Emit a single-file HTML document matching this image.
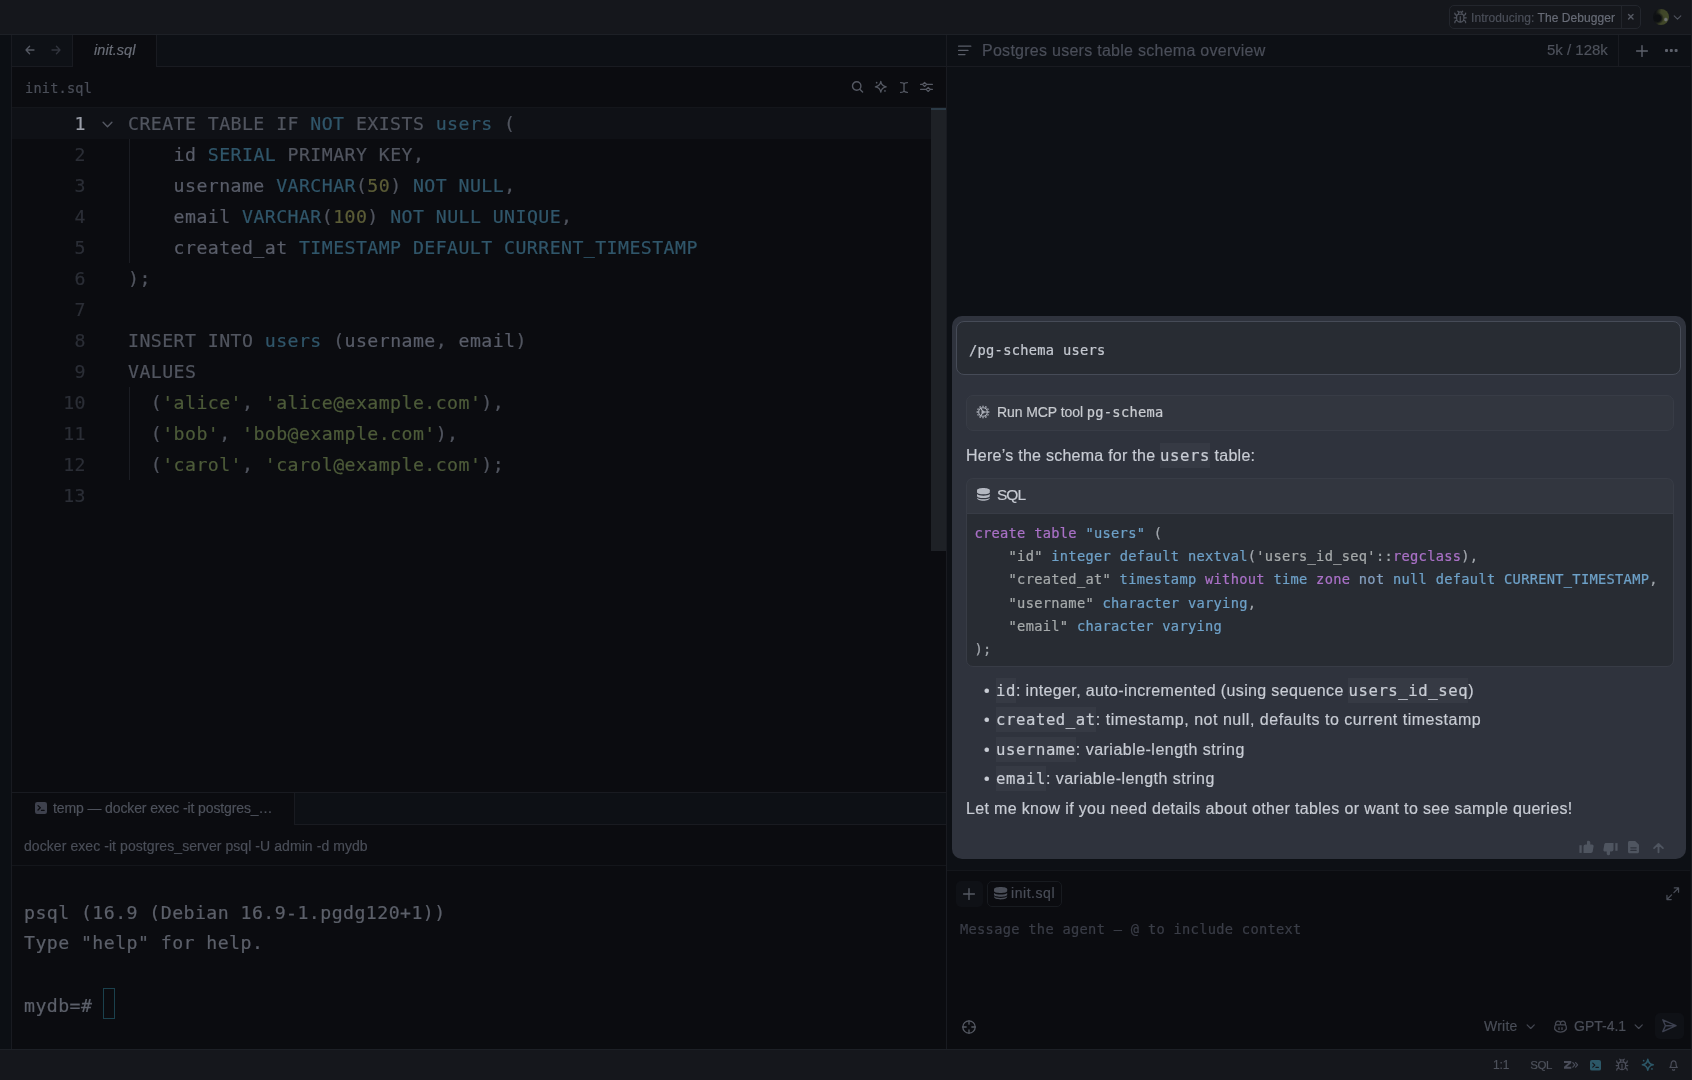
<!DOCTYPE html>
<html lang="en">
<head>
<meta charset="utf-8">
<title>Zed — init.sql</title>
<style>
:root{
  --ui:"Liberation Sans", sans-serif;
  --mono:"DejaVu Sans Mono","Liberation Mono", monospace;
  --bg-title:#15171c;
  --bg-panel:#0d1015;
  --bg-editor:#0b0c10;
  --bd:#191b21;
  --txt:#5d616b;
  --txt-b:#7a7e88;
  --blue:#30566a;
  --num:#5c5d37;
  --str:#4d5b39;
}
*{box-sizing:border-box;margin:0;padding:0}
html,body{width:1692px;height:1080px;overflow:hidden;background:var(--bg-panel)}
body{position:relative;font-family:var(--ui);color:var(--txt);font-size:15px}
.abs{position:absolute}
.t{position:absolute;white-space:pre;line-height:1}
svg{position:absolute;overflow:visible}

/* title + status */
#title{left:0;top:0;width:1692px;height:35px;background:var(--bg-title);border-bottom:1px solid #1d2026}
#status{left:0;top:1049px;width:1692px;height:31px;background:var(--bg-title);border-top:1px solid #1d2026}
#lgut{left:0;top:35px;width:12px;height:1014px;background:#0c0f14;border-right:1px solid var(--bd)}
#rgut{left:1691px;top:0;width:1px;height:1080px;background:#1b1d22;z-index:5}

/* editor pane */
#tabbar{left:12px;top:35px;width:934px;height:32px;background:#0d1015;border-bottom:1px solid var(--bd)}
#nav{left:12px;top:35px;width:61px;height:32px;border-right:1px solid var(--bd);border-bottom:1px solid var(--bd);background:#0e1116}
#tab{left:73px;top:35px;width:84px;height:32px;background:var(--bg-editor);border-right:1px solid var(--bd)}
#toolbar{left:12px;top:67px;width:934px;height:41px;background:var(--bg-editor);border-bottom:1px solid #14161b}
#editor{left:12px;top:108px;width:934px;height:684px;background:var(--bg-editor)}
#actline{left:12px;top:108px;width:919px;height:31px;background:#0f1116}
#scroll{left:931px;top:108px;width:15px;height:443px;background:#1e2126}
#split{left:946px;top:35px;width:1px;height:1014px;background:var(--bd)}

.code{font-family:var(--mono);font-size:18.2px;letter-spacing:.445px;line-height:31px;white-space:pre;position:absolute}
.ln{position:absolute;left:30px;width:56px;text-align:right;color:#2b2e36}
.k{color:#51555f}.b{color:var(--blue)}.p{color:#595d69}.n{color:var(--num)}.s{color:var(--str)}

/* terminal */
#ttabbar{left:12px;top:792px;width:934px;height:33px;background:#0d1015;border-top:1px solid var(--bd);border-bottom:1px solid var(--bd)}
#ttab{left:12px;top:793px;width:283px;height:32px;background:var(--bg-editor);border-right:1px solid var(--bd)}
#tcrumb{left:12px;top:825px;width:934px;height:41px;background:var(--bg-editor);border-bottom:1px solid #14161b}
#term{left:12px;top:866px;width:934px;height:183px;background:var(--bg-editor)}

/* agent */
#ahead{left:947px;top:35px;width:743px;height:32px;background:#0d1015;border-bottom:1px solid var(--bd)}
#abody{left:947px;top:67px;width:743px;height:803px;background:#0d1015}
#aedit{left:947px;top:870px;width:743px;height:179px;background:var(--bg-editor);border-top:1px solid #14161b}

#card{left:952px;top:316px;width:734px;height:543px;background:#2f333d;border-radius:10px}
#umsg{left:956px;top:321px;width:725px;height:54px;background:#282c33;border:1px solid #464b57;border-radius:8px}
#tool{left:966px;top:395px;width:708px;height:36px;background:#32363f;border:1px solid #383c46;border-radius:7px}
#cbh{left:966px;top:478px;width:708px;height:36px;background:#32363f;border:1px solid #383c46;border-bottom:none;border-radius:7px 7px 0 0}
#cbb{left:966px;top:513px;width:708px;height:154px;background:#282c33;border:1px solid #383c46;border-top:1px solid #383c46;border-radius:0 0 7px 7px}
.ccode{font-family:var(--mono);font-size:13.7px;letter-spacing:.3px;line-height:23.2px;white-space:pre;position:absolute;color:#b9bec8}
.ck{color:#aa71c7}.cb{color:#6ea1c8}.cs{color:#a6aaab}.cp{color:#a3a8ae}
.body{font-family:var(--ui);font-size:16px;color:#c8ccd4;letter-spacing:.34px}
.ic{font-family:var(--mono);font-size:15.6px;letter-spacing:.59px;background:#363a44;color:#c8ccd4;padding:4.200px 0 2.800px}

.ui{position:absolute;white-space:pre;font-family:var(--ui);-webkit-text-stroke:.18px currentColor}
.m{font-family:var(--mono)}
.m,.code,.ccode,.ic{-webkit-text-stroke:.22px currentColor}
</style>
</head>
<body>
<div id="root" style="position:absolute;left:0;top:0;width:1692px;height:1080px;will-change:transform;overflow:hidden">
<div class="abs" id="title"></div>
<div class="abs" id="lgut"></div>
<div class="abs" id="rgut"></div>
<div class="abs" id="status"></div>

<!-- EDITOR PANE -->
<div class="abs" id="tabbar"></div>
<div class="abs" id="nav"></div>
<div class="abs" id="tab"></div>
<div class="abs" id="toolbar"></div>
<div class="abs" id="editor"></div>
<div class="abs" id="actline"></div>
<div class="abs" id="scroll"></div>
<div class="abs" style="left:931px;top:108px;width:15px;height:2px;background:#2b3a46"></div>
<div class="abs" id="split"></div>

<!-- TERMINAL -->
<div class="abs" id="ttabbar"></div>
<div class="abs" id="ttab"></div>
<div class="abs" id="tcrumb"></div>
<div class="abs" id="term"></div>

<!-- AGENT -->
<div class="abs" id="ahead"></div>
<div class="abs" id="abody"></div>
<div class="abs" id="aedit"></div>
<div class="abs" id="card"></div>
<div class="abs" id="umsg"></div>
<div class="abs" id="tool"></div>
<div class="abs" id="cbh"></div>
<div class="abs" id="cbb"></div>


<!-- editor text -->
<div class="code ln" style="top:108px;color:#9a9ea8">1</div>
<div class="code ln" style="top:139px">2</div>
<div class="code ln" style="top:170px">3</div>
<div class="code ln" style="top:201px">4</div>
<div class="code ln" style="top:232px">5</div>
<div class="code ln" style="top:263px">6</div>
<div class="code ln" style="top:294px">7</div>
<div class="code ln" style="top:325px">8</div>
<div class="code ln" style="top:356px">9</div>
<div class="code ln" style="top:387px">10</div>
<div class="code ln" style="top:418px">11</div>
<div class="code ln" style="top:449px">12</div>
<div class="code ln" style="top:480px">13</div>
<div class="abs" style="left:129px;top:139px;width:1px;height:124px;background:#1b1d23"></div>
<div class="abs" style="left:129px;top:387px;width:1px;height:93px;background:#1b1d23"></div>
<div class="code" style="left:128px;top:108px"><span class="k">CREATE TABLE IF</span> <span class="b">NOT</span> <span class="k">EXISTS</span> <span class="b">users</span> <span class="k">(</span></div>
<div class="code" style="left:128px;top:139px">    <span class="p">id</span> <span class="b">SERIAL</span> <span class="k">PRIMARY KEY,</span></div>
<div class="code" style="left:128px;top:170px">    <span class="p">username</span> <span class="b">VARCHAR</span><span class="k">(</span><span class="n">50</span><span class="k">)</span> <span class="b">NOT NULL</span><span class="k">,</span></div>
<div class="code" style="left:128px;top:201px">    <span class="p">email</span> <span class="b">VARCHAR</span><span class="k">(</span><span class="n">100</span><span class="k">)</span> <span class="b">NOT NULL UNIQUE</span><span class="k">,</span></div>
<div class="code" style="left:128px;top:232px">    <span class="p">created_at</span> <span class="b">TIMESTAMP DEFAULT CURRENT_TIMESTAMP</span></div>
<div class="code" style="left:128px;top:263px"><span class="k">);</span></div>
<div class="code" style="left:128px;top:325px"><span class="k">INSERT INTO</span> <span class="b">users</span> <span class="k">(</span><span class="p">username</span><span class="k">,</span> <span class="p">email</span><span class="k">)</span></div>
<div class="code" style="left:128px;top:356px"><span class="k">VALUES</span></div>
<div class="code" style="left:128px;top:387px">  <span class="k">(</span><span class="s">'alice'</span><span class="k">,</span> <span class="s">'alice@example.com'</span><span class="k">),</span></div>
<div class="code" style="left:128px;top:418px">  <span class="k">(</span><span class="s">'bob'</span><span class="k">,</span> <span class="s">'bob@example.com'</span><span class="k">),</span></div>
<div class="code" style="left:128px;top:449px">  <span class="k">(</span><span class="s">'carol'</span><span class="k">,</span> <span class="s">'carol@example.com'</span><span class="k">);</span></div>

<!-- terminal text -->
<div class="code" style="left:24px;top:897px;color:#5c606a">psql (16.9 (Debian 16.9-1.pgdg120+1))</div>
<div class="code" style="left:24px;top:927.3px;color:#5c606a">Type "help" for help.</div>
<div class="code" style="left:24px;top:990px;color:#5c606a">mydb=# </div>
<div class="abs" style="left:103px;top:988px;width:12px;height:31px;border:1px solid #1b414d"></div>


<!-- ui text: editor pane -->
<div class="ui" style="left:94px;top:42px;font-size:14.5px;line-height:17px;font-style:italic;color:#6a6e78;letter-spacing:.05px">init.sql</div>
<div class="ui m" style="left:25px;top:79.5px;font-size:13.6px;line-height:17px;color:#4a4e58;letter-spacing:.2px">init.sql</div>
<div class="ui" style="left:53px;top:800px;font-size:14px;line-height:17px;color:#4e525c;letter-spacing:-.12px">temp — docker exec -it postgres_…</div>
<div class="ui" style="left:24px;top:837.5px;font-size:14px;line-height:17px;color:#4a4e58;letter-spacing:.07px">docker exec -it postgres_server psql -U admin -d mydb</div>

<!-- title bar banner -->
<div class="abs" style="left:1449px;top:5px;width:192px;height:24px;border:1px solid #23262d;border-radius:5px"></div>
<div class="abs" style="left:1620.5px;top:5px;width:1.5px;height:24px;background:#22252b"></div>
<div class="ui" style="left:1471px;top:10.5px;font-size:12px;line-height:14px;color:#4b4f59;letter-spacing:.06px">Introducing: <span style="color:#686c77">The Debugger</span></div>
<div class="abs" style="left:1653px;top:9px;width:16px;height:16px;border-radius:50%;background:radial-gradient(circle at 80% 66%,#6f7374 0,#6f7374 6%,rgba(111,115,116,0) 14%),radial-gradient(circle at 30% 58%,#0d0f12 0,#0d0f12 22%,rgba(13,15,18,0) 42%),linear-gradient(100deg,#101215 0,#101215 18%,#3f4528 46%,#434a2a 100%)"></div>

<!-- agent header -->
<div class="ui" style="left:982px;top:41px;font-size:16px;line-height:19px;color:#4a4e59;letter-spacing:.27px">Postgres users table schema overview</div>
<div class="ui" style="left:1547px;top:41px;font-size:15px;line-height:17px;color:#4e525c">5k / 128k</div>
<div class="abs" style="left:1618px;top:35px;width:1px;height:32px;background:#191b21"></div>

<!-- card text -->
<div class="ui m" style="left:969px;top:339.5px;font-size:13.7px;line-height:20px;color:#c3c7cf;letter-spacing:.3px">/pg-schema users</div>
<div class="ui" style="left:997px;top:403px;font-size:14px;line-height:19px;color:#c8cbd0;letter-spacing:-.08px">Run MCP tool <span class="m" style="font-size:13.7px;letter-spacing:.3px">pg-schema</span></div>
<div class="ui body" style="left:966px;top:445px;line-height:22px;letter-spacing:.255px">Here’s the schema for the <span class="ic">users</span> table:</div>
<div class="ui" style="left:997px;top:484.8px;font-size:15.5px;line-height:19px;color:#c8ccd4;letter-spacing:-1px">SQL</div>

<div class="ccode" style="left:974.4px;top:522px"><span class="ck">create</span> <span class="ck">table</span> <span class="cb">"users"</span> <span class="cp">(</span>
    <span class="cs">"id"</span> <span class="cb">integer</span> <span class="cb">default</span> <span class="cb">nextval</span><span class="cp">(</span><span class="cs">'users_id_seq'</span><span class="cp">::</span><span class="ck">regclass</span><span class="cp">),</span>
    <span class="cs">"created_at"</span> <span class="cb">timestamp</span> <span class="ck">without</span> <span class="cb">time</span> <span class="ck">zone</span> <span style="color:#86a0c0">not</span> <span class="cb">null</span> <span class="cb">default</span> <span class="cb">CURRENT_TIMESTAMP</span><span class="cp">,</span>
    <span class="cs">"username"</span> <span class="cb">character</span> <span class="cb">varying</span><span class="cp">,</span>
    <span class="cs">"email"</span> <span class="cb">character</span> <span class="cb">varying</span>
<span class="cp">);</span></div>

<div class="ui body" style="left:984px;top:680px;line-height:22px">•</div>
<div class="ui body" style="left:984px;top:709.4px;line-height:22px">•</div>
<div class="ui body" style="left:984px;top:738.8px;line-height:22px">•</div>
<div class="ui body" style="left:984px;top:768.2px;line-height:22px">•</div>
<div class="ui body" style="left:996px;top:680px;line-height:22px;letter-spacing:.36px"><span class="ic">id</span>: integer, auto-incremented (using sequence <span class="ic">users_id_seq</span>)</div>
<div class="ui body" style="left:996px;top:709.4px;line-height:22px;letter-spacing:.52px"><span class="ic">created_at</span>: timestamp, not null, defaults to current timestamp</div>
<div class="ui body" style="left:996px;top:738.8px;line-height:22px;letter-spacing:.48px"><span class="ic">username</span>: variable-length string</div>
<div class="ui body" style="left:996px;top:768.2px;line-height:22px;letter-spacing:.48px"><span class="ic">email</span>: variable-length string</div>
<div class="ui body" style="left:966px;top:797.6px;line-height:22px">Let me know if you need details about other tables or want to see sample queries!</div>

<!-- message editor -->
<div class="abs" style="left:956px;top:881px;width:27px;height:26px;background:#0f1116;border-radius:5px"></div>
<div class="abs" style="left:987px;top:881px;width:75px;height:26px;border:1px solid #181b20;border-radius:5px"></div>
<div class="ui" style="left:1011px;top:885px;font-size:14px;line-height:17px;color:#4a4e58;letter-spacing:.55px">init.sql</div>
<div class="ui m" style="left:960px;top:919px;font-size:13.7px;line-height:20px;color:#3a3d47;letter-spacing:.3px">Message the agent – @ to include context</div>
<div class="ui" style="left:1484px;top:1017.7px;font-size:14px;line-height:17px;color:#4a4e58;letter-spacing:.25px">Write</div>
<div class="ui" style="left:1574px;top:1017.5px;font-size:14px;line-height:17px;color:#4a4e58">GPT-4.1</div>
<div class="abs" style="left:1655px;top:1013px;width:29px;height:26px;background:#0f1116;border-radius:5px"></div>

<!-- icons -->
<svg style="left:25px;top:45px" width="10" height="10" viewBox="0 0 10 10" fill="none" stroke-linecap="round" stroke-linejoin="round" ><path d="M9 5H1M4.600 1.200L1 5l3.600 3.800" stroke="#555963" stroke-width="1.300"/></svg>
<svg style="left:51px;top:45px" width="10" height="10" viewBox="0 0 10 10" fill="none" stroke-linecap="round" stroke-linejoin="round" ><path d="M1 5h8M5.400 1.200L9 5 5.400 8.800" stroke="#32353e" stroke-width="1.300"/></svg>
<svg style="left:102px;top:121px" width="11" height="7" viewBox="0 0 10 6" fill="none" stroke-linecap="round" stroke-linejoin="round" ><path d="M1 1l4 4 4-4" stroke="#555963" stroke-width="1.300"/></svg>
<svg style="left:851px;top:80px" width="13" height="13" viewBox="0 0 13 13" fill="none" stroke-linecap="round" stroke-linejoin="round" ><circle cx="5.700" cy="6" r="4.200" stroke="#555963" stroke-width="1.400"/><path d="M8.800 9.200l2.800 2.800" stroke="#555963" stroke-width="1.400"/></svg>
<svg style="left:873.65px;top:80.1px" width="13.6" height="13.6" viewBox="0 0 16 16" fill="none" stroke-linecap="round" stroke-linejoin="round" stroke="#555963" stroke-width="1.500" color="#555963"><path d="M8 1.6C8.5 5.2 10.8 7.5 14.4 8C10.8 8.5 8.5 10.8 8 14.4C7.5 10.8 5.2 8.5 1.6 8C5.2 7.5 7.5 5.2 8 1.6Z"/><circle cx="3.1" cy="3.1" r="1" fill="currentColor" stroke="none"/><circle cx="12.9" cy="12.9" r="1" fill="currentColor" stroke="none"/></svg>
<svg style="left:899.5px;top:81.5px" width="8" height="11" viewBox="0 0 8 11" fill="none" stroke-linecap="round" stroke-linejoin="round" ><path d="M4 1.800v7.400M.6.600C2.600.6 4 1 4 2.400 4 1 5.400.6 7.400.6M.6 10.400c2 0 3.400-.4 3.400-1.800 0 1.400 1.400 1.800 3.400 1.800" stroke="#555963" stroke-width="1.300"/></svg>
<svg style="left:920px;top:81px" width="13" height="12" viewBox="0 0 13 12" fill="none" stroke-linecap="round" stroke-linejoin="round" ><path d="M.6 3.400h1.800M6.800 3.400h5.600M.6 8.400h5.400M10.400 8.400h2" stroke="#555963" stroke-width="1.200"/><path d="M4.600 1.300l2.100 2.100-2.100 2.100-2.100-2.100zM8.200 6.300l2.100 2.100-2.100 2.100-2.100-2.100z" stroke="#555963" stroke-width="1.100"/></svg>
<svg style="left:35.3px;top:802px" width="12" height="12" viewBox="0 0 12 12" fill="none" stroke-linecap="round" stroke-linejoin="round" color="#3e414d"><rect x="0" y="0" width="12" height="12" rx="2.2" fill="currentColor" stroke="none"/><path d="M3 3.600l2.300 2.200L3 8" stroke="#0b0c10" stroke-width="1.300"/><path d="M6.500 8.400h2.600" stroke="#0b0c10" stroke-width="1.300"/></svg>
<svg style="left:1453.2px;top:9.9px" width="14.5" height="14.5" viewBox="0 0 24 24" fill="none" stroke-linecap="round" stroke-linejoin="round" stroke="#50545e" stroke-width="2"><path d="m8 2 1.88 1.88M14.12 3.88 16 2M9 7.13v-1a3 3 0 1 1 6 0v1M12 20c-3.3 0-6-2.7-6-6v-3a4 4 0 0 1 4-4h4a4 4 0 0 1 4 4v3c0 3.3-2.7 6-6 6M12 20v-9M6.53 9C4.6 8.8 3 7.1 3 5M6 13H2M3 21c0-2.1 1.7-3.9 3.8-4M20.97 5c0 2.1-1.6 3.8-3.5 4M22 13h-4M17.2 17c2.1.1 3.8 1.9 3.8 4"/></svg>
<svg style="left:1627.9px;top:14.1px" width="5.6" height="5.6" viewBox="0 0 6 6" fill="none" stroke-linecap="round" stroke-linejoin="round" ><path d="M.6.600l4.800 4.800M5.400.6L.6 5.400" stroke="#555963" stroke-width="1.500"/></svg>
<svg style="left:1673px;top:15px" width="9" height="5" viewBox="0 0 10 6" fill="none" stroke-linecap="round" stroke-linejoin="round" ><path d="M1 1l4 4 4-4" stroke="#50545e" stroke-width="1.300"/></svg>
<svg style="left:957.5px;top:45px" width="14" height="11" viewBox="0 0 14 11" fill="none" stroke-linecap="round" stroke-linejoin="round" ><path d="M.6 1.200h12.200M.6 5.400h9.400M.6 9.600h6.400" stroke="#5a5e69" stroke-width="1.300"/></svg>
<svg style="left:1635.5px;top:44.5px" width="12" height="12" viewBox="0 0 12 12" fill="none" stroke-linecap="round" stroke-linejoin="round" ><path d="M6 .6v10.800M.6 6h10.800" stroke="#5d616c" stroke-width="1.400"/></svg>
<div class="abs" style="left:1665px;top:49px;width:2.500px;height:2.500px;background:#5d616c;border-radius:1px;box-shadow:4.800px 0 0 #5d616c,9.600px 0 0 #5d616c"></div>
<svg style="left:976.1px;top:405.2px" width="14" height="14" viewBox="0 0 24 24" fill="none" stroke-linecap="round" stroke-linejoin="round" stroke="#b4b8c1" stroke-width="1.900"><circle cx="12" cy="12" r="7.4"/><circle cx="12" cy="12" r="1.8"/><path d="M20.80 12.00L22.90 12.00M19.62 16.40L21.44 17.45M16.40 19.62L17.45 21.44M12.00 20.80L12.00 22.90M7.60 19.62L6.55 21.44M4.38 16.40L2.56 17.45M3.20 12.00L1.10 12.00M4.38 7.60L2.56 6.55M7.60 4.38L6.55 2.56M12.00 3.20L12.00 1.10M16.40 4.38L17.45 2.56M19.62 7.60L21.44 6.55" stroke-width="2.6" stroke-linecap="butt"/><path d="M13.8 12h5.600M11.100 10.440L8.300 5.600M11.100 13.560L8.300 18.400"/></svg>
<svg style="left:976.6px;top:488px" width="12.8" height="12.8" preserveAspectRatio="none" viewBox="1 1 12 13" fill="none" stroke-linecap="round" stroke-linejoin="round" color="#b4b8c1"><path d="M1 3.4C1 1.9 3.7 1 7 1s6 .9 6 2.4v1.9c0 1.3-2.7 2.1-6 2.1S1 6.600 1 5.300z" fill="currentColor" stroke="none"/><path d="M1 7.200c1 1.100 3.300 1.700 6 1.700s5-.6 6-1.700V9c0 1.300-2.700 2.100-6 2.100S1 10.300 1 9z" fill="currentColor" stroke="none"/><path d="M1 10.800c1 1.100 3.300 1.700 6 1.700s5-.6 6-1.700v.4C13 12.800 10.300 14 7 14s-6-1.200-6-2.800z" fill="currentColor" stroke="none"/></svg>
<svg style="left:1579px;top:840px" width="15" height="14" viewBox="0 0 15 14" fill="none" stroke-linecap="round" stroke-linejoin="round" ><path d="M.4 5.200h2.300v7.700H.4z" fill="#4f5560"/><path d="M4.500 12.900V6.400c0-1.100.9-2 2-2H8V2c0-.7.500-1.200 1.200-1.200h.3c1 0 1.800.8 1.800 1.800v1.800h1.700c1 0 1.800.9 1.600 1.900l-.9 5.200c-.1.800-.9 1.400-1.700 1.400z" fill="#4f5560"/></svg>
<svg style="left:1602.5px;top:841.5px" width="15" height="14" viewBox="0 0 15 14" fill="none" stroke-linecap="round" stroke-linejoin="round" ><g transform="rotate(180 7.500 7)"><path d="M.4 5.200h2.300v7.700H.4z" fill="#4f5560"/><path d="M4.500 12.900V6.400c0-1.100.9-2 2-2H8V2c0-.7.500-1.200 1.200-1.200h.3c1 0 1.800.8 1.800 1.800v1.800h1.700c1 0 1.800.9 1.600 1.900l-.9 5.200c-.1.800-.9 1.400-1.700 1.400z" fill="#4f5560"/></g></svg>
<svg style="left:1628.4px;top:841.4px" width="11" height="12.2" viewBox="0 0 11 12.200" fill="none" stroke-linecap="round" stroke-linejoin="round" ><path d="M1.500 0h5.700L11 3.800v6.900c0 .8-.7 1.500-1.500 1.500h-8C.7 12.200 0 11.500 0 10.700V1.500C0 .7.700 0 1.500 0z" fill="#4f5560"/><path d="M2.800 6.800h5.400M2.800 9.300h5.400" stroke="#2f333d" stroke-width="1.200"/></svg>
<svg style="left:1652.5px;top:842.5px" width="11" height="10" viewBox="0 0 11 10" fill="none" stroke-linecap="round" stroke-linejoin="round" ><path d="M5.500 9.300V1.600M1.100 5.100l4.400-4.200 4.400 4.200" stroke="#4f5560" stroke-width="1.900"/></svg>
<svg style="left:963px;top:887.5px" width="12" height="12" viewBox="0 0 12 12" fill="none" stroke-linecap="round" stroke-linejoin="round" ><path d="M6 .6v10.800M.6 6h10.800" stroke="#555963" stroke-width="1.400"/></svg>
<svg style="left:993.5px;top:887.3px" width="13.2" height="12.4" preserveAspectRatio="none" viewBox="1 1 12 13" fill="none" stroke-linecap="round" stroke-linejoin="round" color="#4a4e58"><path d="M1 3.4C1 1.9 3.7 1 7 1s6 .9 6 2.4v1.9c0 1.3-2.7 2.1-6 2.1S1 6.600 1 5.300z" fill="currentColor" stroke="none"/><path d="M1 7.200c1 1.100 3.300 1.700 6 1.700s5-.6 6-1.700V9c0 1.300-2.700 2.100-6 2.100S1 10.300 1 9z" fill="currentColor" stroke="none"/><path d="M1 10.800c1 1.100 3.300 1.700 6 1.700s5-.6 6-1.700v.4C13 12.800 10.300 14 7 14s-6-1.200-6-2.800z" fill="currentColor" stroke="none"/></svg>
<svg style="left:1665.5px;top:887px" width="13.5" height="13.5" viewBox="0 0 14 14" fill="none" stroke-linecap="round" stroke-linejoin="round" ><path d="M8.600 1h4.400v4.400M13 1L8.200 5.800M5.400 13H1V8.600M1 13l4.800-4.800" stroke="#4a4e58" stroke-width="1.300"/></svg>
<svg style="left:961.8px;top:1019.6px" width="14" height="14" viewBox="0 0 14 14" fill="none" stroke-linecap="round" stroke-linejoin="round" ><circle cx="7" cy="7" r="6.200" stroke="#555963" stroke-width="1.300"/><path d="M7 .8v3.400M7 9.800v3.400M.8 7h3.400M9.800 7h3.400" stroke="#555963" stroke-width="1.300"/></svg>
<svg style="left:1526.3px;top:1024px" width="9.4" height="5.4" viewBox="0 0 10 6" fill="none" stroke-linecap="round" stroke-linejoin="round" ><path d="M1 1l4 4 4-4" stroke="#454852" stroke-width="1.300"/></svg>
<svg style="left:1634.3px;top:1024px" width="9.4" height="5.4" viewBox="0 0 10 6" fill="none" stroke-linecap="round" stroke-linejoin="round" ><path d="M1 1l4 4 4-4" stroke="#454852" stroke-width="1.300"/></svg>
<svg style="left:1553.5px;top:1020px" width="13" height="13" viewBox="0 0 13 13" fill="none" stroke-linecap="round" stroke-linejoin="round" ><path d="M1.600 5.200C1.200 3 2.200 1.200 4.200 1.200c1.400 0 2.300.8 2.300 2 0-1.200.9-2 2.300-2 2 0 3 1.800 2.600 4M1.600 5C.9 5.600.7 6.400.7 7.400v1.800c1.400 1.900 3.600 2.900 5.800 2.900s4.400-1 5.800-2.900V7.400c0-1-.2-1.800-.9-2.400M2.200 4.800h3.600c.5 0 .7-.4.700-1M10.800 4.800H7.200c-.5 0-.7-.4-.7-1" stroke="#454852" stroke-width="1.300"/><path d="M5 7.800v1.600M8 7.800v1.600" stroke="#454852" stroke-width="1.400"/></svg>
<svg style="left:1661.5px;top:1019px" width="15" height="13.5" viewBox="0 0 15 13.500" fill="none" stroke-linecap="round" stroke-linejoin="round" ><path d="M.8.800L14 6.700.8 12.600l2.600-5.900zM3.400 6.700H14" stroke="#3d4150" stroke-width="1.400"/></svg>
<svg style="left:1563.5px;top:1061.2px" width="15" height="8" viewBox="0 0 15 8" fill="none" stroke-linecap="round" stroke-linejoin="round"><path d="M0 0h7.300v1.900L2.900 5.800h4.400v1.900H0V5.800l4.400-3.900H0z" fill="#4a4d59"/><path d="M8.800 1.700l2 2.200-2 2.200M11.600 1.700l2 2.200-2 2.200" stroke="#4a4d59" stroke-width="1.200"/></svg>
<svg style="left:1590px;top:1059.7px" width="11" height="10.6" viewBox="0 0 12 12" fill="none" stroke-linecap="round" stroke-linejoin="round" color="#2c5767" preserveAspectRatio="none"><rect x="0" y="0" width="12" height="12" rx="2.2" fill="currentColor" stroke="none"/><path d="M3 3.600l2.300 2.200L3 8" stroke="#15171c" stroke-width="1.300"/><path d="M6.500 8.400h2.600" stroke="#15171c" stroke-width="1.300"/></svg>
<svg style="left:1614.55px;top:1058.15px" width="14" height="14" viewBox="0 0 24 24" fill="none" stroke-linecap="round" stroke-linejoin="round" stroke="#4a4d59" stroke-width="2"><path d="m8 2 1.88 1.88M14.12 3.88 16 2M9 7.13v-1a3 3 0 1 1 6 0v1M12 20c-3.3 0-6-2.7-6-6v-3a4 4 0 0 1 4-4h4a4 4 0 0 1 4 4v3c0 3.3-2.7 6-6 6M12 20v-9M6.53 9C4.6 8.8 3 7.1 3 5M6 13H2M3 21c0-2.1 1.7-3.9 3.8-4M20.97 5c0 2.1-1.6 3.8-3.5 4M22 13h-4M17.2 17c2.1.1 3.8 1.9 3.8 4"/></svg>
<svg style="left:1640.6px;top:1058.2px" width="13.6" height="13.6" viewBox="0 0 16 16" fill="none" stroke-linecap="round" stroke-linejoin="round" stroke="#2c5767" stroke-width="1.800" color="#2c5767"><path d="M8 1.6C8.5 5.2 10.8 7.5 14.4 8C10.8 8.5 8.5 10.8 8 14.4C7.5 10.8 5.2 8.5 1.6 8C5.2 7.5 7.5 5.2 8 1.6Z"/><circle cx="3.1" cy="3.1" r="1" fill="currentColor" stroke="none"/><circle cx="12.9" cy="12.9" r="1" fill="currentColor" stroke="none"/></svg>
<svg style="left:1668.9px;top:1059.85px" width="9.2" height="11" viewBox="0 0 10 12" fill="none" stroke-linecap="round" stroke-linejoin="round" ><path d="M1 8.200c.9-.8 1.300-1.800 1.300-3.400C2.300 2.600 3.400 1 5 1s2.700 1.600 2.700 3.800c0 1.600.4 2.600 1.300 3.400zM3.900 10.600c.5.500 1.700.5 2.200 0" stroke="#4a4d59" stroke-width="1.300"/></svg>
<!-- status bar text -->

<div class="ui" style="left:1493px;top:1058px;font-size:12px;line-height:14px;color:#4e525c;letter-spacing:-.1px">1:1</div>
<div class="ui" style="left:1530.3px;top:1057.5px;font-size:11.5px;line-height:14px;color:#4e525c;letter-spacing:-.5px">SQL</div>

</div>
</body>
</html>
